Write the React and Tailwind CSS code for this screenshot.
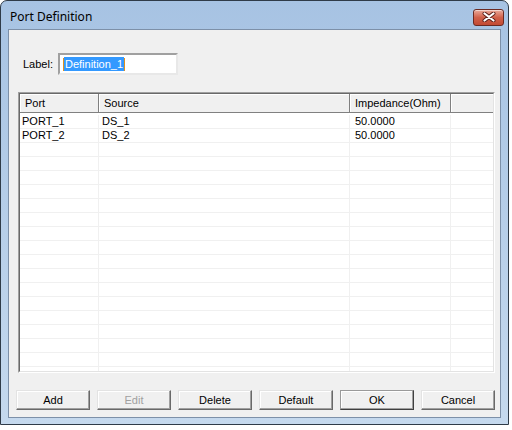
import React from 'react';

const rows = [
  { port: 'PORT_1', source: 'DS_1', imp: '50.0000' },
  { port: 'PORT_2', source: 'DS_2', imp: '50.0000' },
];

function CloseButton() {
  return (
    <div className="w-[31px] h-[17px] rounded-[3px] border border-[#6b2a22] bg-gradient-to-b from-[#e9a99a] via-[#d0604a] to-[#c24a33] flex items-center justify-center shadow-[inset_0_1px_0_rgba(255,255,255,0.5)]">
      <svg width="14" height="10" viewBox="0 0 14 10">
        <path d="M2.5 1.5 L11.5 8.5 M11.5 1.5 L2.5 8.5" stroke="#5a1e18" strokeWidth="4" strokeLinecap="round" />
        <path d="M2.5 1.5 L11.5 8.5 M11.5 1.5 L2.5 8.5" stroke="#ffffff" strokeWidth="2.2" strokeLinecap="round" />
      </svg>
    </div>
  );
}

function Button({ children, disabled, primary }) {
  return (
    <button
      className={
        'w-[74px] h-[20px] text-[11px] leading-none bg-[#f0f0f0] border ' +
        (primary
          ? 'border-t-[#9a9a9a] border-l-[#9a9a9a] border-r-[#404040] border-b-[#404040] shadow-[inset_-1px_-1px_0_#a0a0a0,inset_1px_1px_0_#ffffff]'
          : 'border-t-[#e3e3e3] border-l-[#e3e3e3] border-r-[#696969] border-b-[#696969] shadow-[inset_-1px_-1px_0_#a0a0a0,inset_1px_1px_0_#ffffff]') +
        (disabled ? ' text-[#a0a0a0]' : ' text-black')
      }
    >
      {children}
    </button>
  );
}

export default function App() {
  const emptyRows = Array.from({ length: 17 });

  return (
    <div className="w-[512px] h-[430px] bg-white font-['Liberation_Sans',Arial,sans-serif]">
      <div className="w-[509px] h-[425px] border border-[#2f3b48] rounded-t-[7px] bg-gradient-to-b from-[#a7c3e3] to-[#c5d9ee] flex flex-col overflow-hidden">
        {/* title bar */}
        <div className="h-[28px] flex items-center justify-between pl-[9px] pr-[4px] pt-[4px] shrink-0">
          <span className="text-[12px] text-black font-['Noto_Sans',sans-serif]">Port Definition</span>
          <CloseButton />
        </div>

        {/* client */}
        <div className="mx-[7px] h-[389px] border border-[#7d90a8] bg-[#f0f0f0] flex flex-col">
          <div className="flex items-center mt-[23px] pl-[14px]">
            <span className="text-[11px] text-black">Label:</span>
            <div className="ml-[5px] w-[120px] h-[22px] bg-white border-2 border-t-[#a0a0a0] border-l-[#a0a0a0] border-r-[#e8e8e8] border-b-[#e8e8e8] flex items-center pl-[3px]">
              <span className="w-px h-[13px] bg-[#e0901e]" />
              <span className="bg-[#3399ff] text-white text-[11px] leading-[14px] px-px">Definition_1</span>
              <span className="w-px h-[13px] bg-[#e0901e]" />
            </div>
          </div>

          {/* list */}
          <div className="ml-[9px] mr-[5px] mt-[17px] h-[281px] border border-t-[#a0a0a0] border-l-[#a0a0a0] border-r-[#ffffff] border-b-[#ffffff]">
            <div className="h-full border border-t-[#696969] border-l-[#696969] border-r-[#e3e3e3] border-b-[#e3e3e3] bg-white flex flex-col overflow-hidden">
              <div className="h-[19px] flex text-[11px] text-black bg-[#f0f0f0] shrink-0">
                <div className="w-[79px] border-r border-b border-[#808080] shadow-[inset_1px_1px_0_#ffffff] pl-[5px] flex items-center">Port</div>
                <div className="w-[251px] border-r border-b border-[#808080] shadow-[inset_1px_1px_0_#ffffff] pl-[5px] flex items-center">Source</div>
                <div className="w-[101px] border-r border-b border-[#808080] shadow-[inset_1px_1px_0_#ffffff] pl-[5px] flex items-center">Impedance(Ohm)</div>
                <div className="flex-1 border-b border-[#808080] shadow-[inset_1px_1px_0_#ffffff]" />
              </div>
              <div className="h-[2px] shrink-0" />
              {rows.map((r) => (
                <div key={r.port} className="h-[14px] flex text-[11px] leading-[13px] text-black border-b border-[#f0f0f0] shrink-0">
                  <div className="w-[79px] border-r border-[#f0f0f0] pl-[2px]">{r.port}</div>
                  <div className="w-[251px] border-r border-[#f0f0f0] pl-[3px]">{r.source}</div>
                  <div className="w-[101px] border-r border-[#f0f0f0] pl-[5px]">{r.imp}</div>
                  <div className="flex-1" />
                </div>
              ))}
              {emptyRows.map((_, i) => (
                <div key={i} className="h-[14px] flex border-b border-[#f0f0f0] shrink-0">
                  <div className="w-[79px] border-r border-[#f0f0f0]" />
                  <div className="w-[251px] border-r border-[#f0f0f0]" />
                  <div className="w-[101px] border-r border-[#f0f0f0]" />
                  <div className="flex-1" />
                </div>
              ))}
            </div>
          </div>

          {/* buttons */}
          <div className="mt-[17px] ml-[7px] mr-[5px] flex justify-between">
            <Button>Add</Button>
            <Button disabled>Edit</Button>
            <Button>Delete</Button>
            <Button>Default</Button>
            <Button primary>OK</Button>
            <Button>Cancel</Button>
          </div>
        </div>
      </div>
    </div>
  );
}
